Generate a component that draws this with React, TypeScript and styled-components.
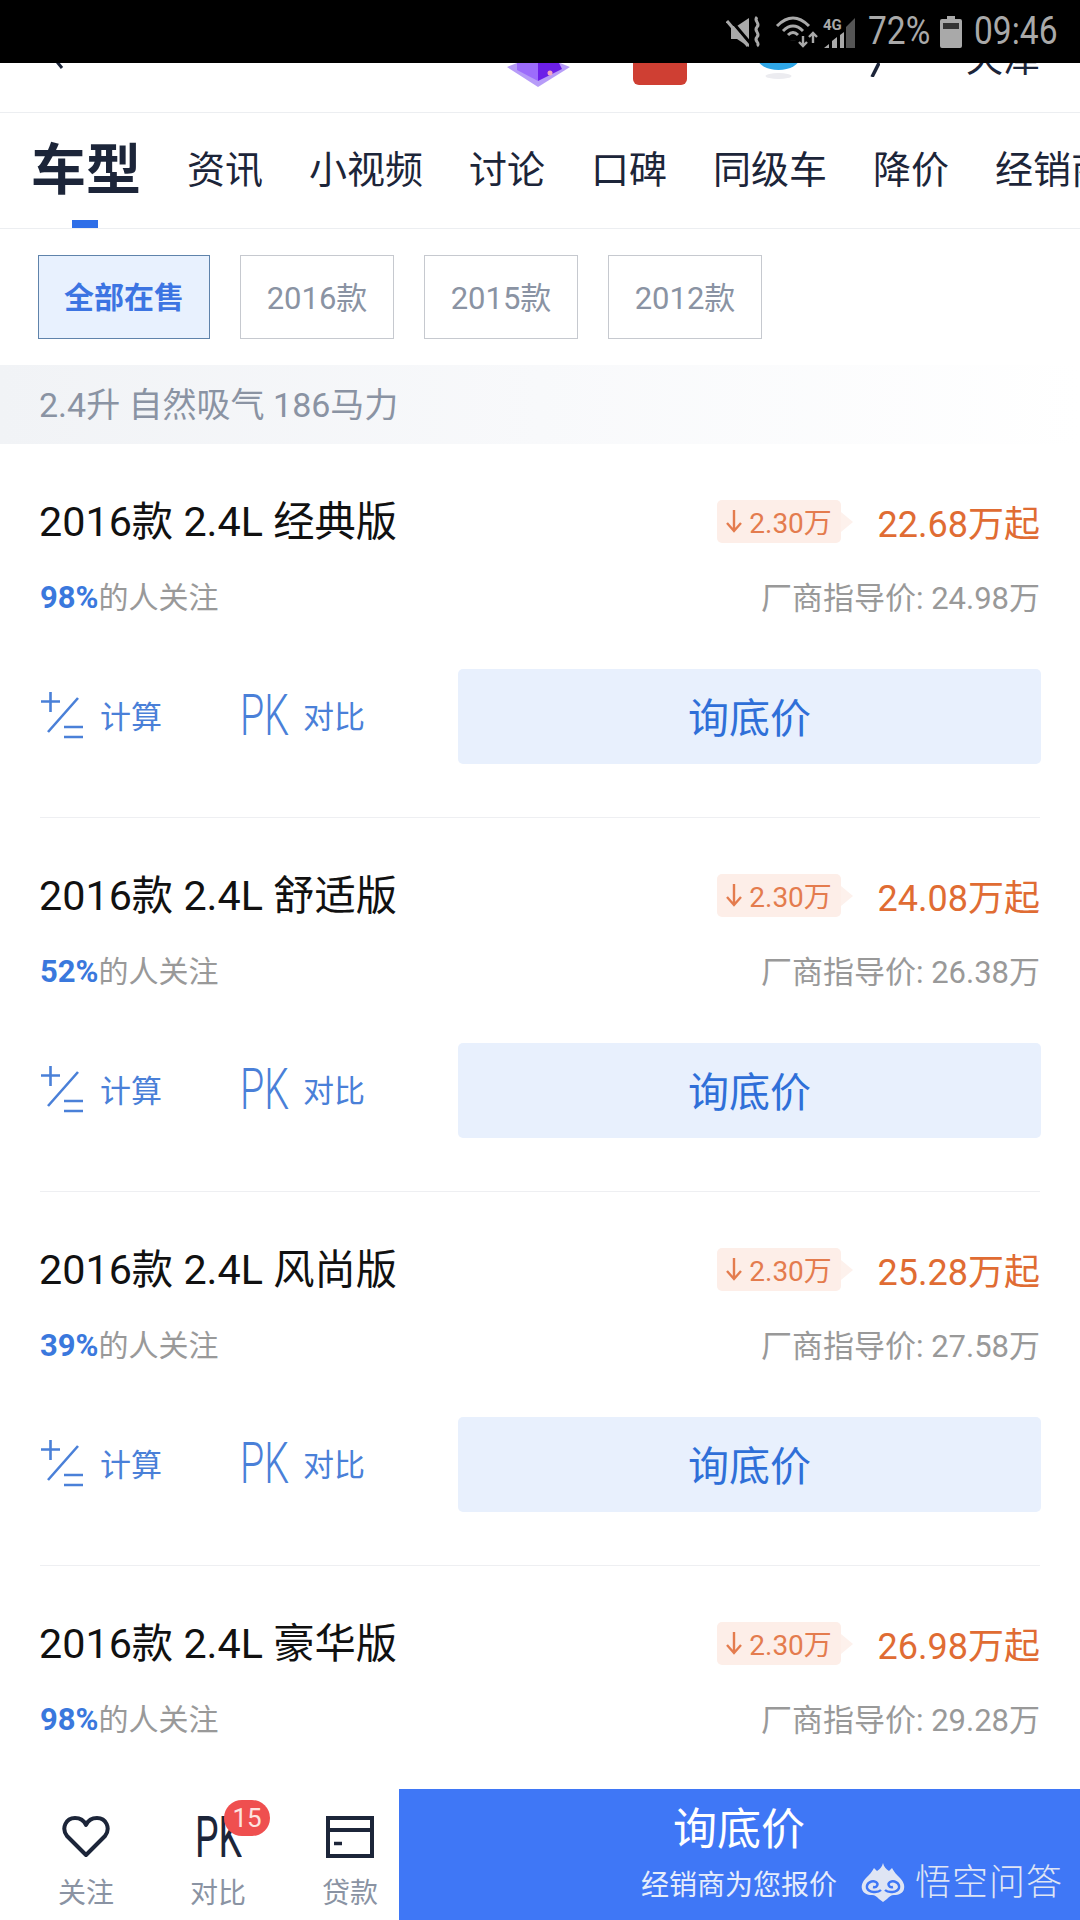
import styled, { createGlobalStyle } from 'styled-components'

const GlobalStyle = createGlobalStyle`
  html, body {
    margin: 0;
    padding: 0;
    background: #fff;
  }
  body {
    font-family: Roboto, "Noto Sans CJK SC", sans-serif;
  }
`

const Page = styled.div`
  width: 1080px;
  height: 1920px;
  display: flex;
  flex-direction: column;
  overflow: hidden;
  background: #fff;
`

const StatusBar = styled.div`
  height: 63px;
  flex: none;
  background: #000;
  color: #a9a9a9;
  display: flex;
  align-items: center;
  justify-content: flex-end;
  padding: 0 21px 0 0;
  box-sizing: border-box;
`

const StatusText = styled.span<{ $w: number }>`
  width: ${(p) => p.$w}px;
  font-size: 39px;
  line-height: 63px;
  white-space: nowrap;
  display: inline-block;
  transform: scaleX(0.86);
  transform-origin: left center;
`

const StatusIcon = styled.svg<{ $mr: number }>`
  flex: none;
  margin-right: ${(p) => p.$mr}px;
`

const TopNav = styled.div`
  height: 49px;
  flex: none;
  overflow: hidden;
  display: flex;
  align-items: flex-end;
  border-bottom: 1px solid #eceef1;
  box-sizing: content-box;
`

const NavIcon = styled.svg<{ $ml: number; $mb: number }>`
  flex: none;
  margin-left: ${(p) => p.$ml}px;
  margin-bottom: ${(p) => p.$mb}px;
`

const CityText = styled.span`
  flex: none;
  margin-left: 86px;
  margin-bottom: 32px;
  font-size: 37px;
  line-height: 40px;
  color: #1c2539;
`

const Tabs = styled.div`
  height: 115px;
  flex: none;
  display: flex;
  overflow: hidden;
  padding-left: 31px;
  gap: 46px;
  border-bottom: 1px solid #eceef1;
  white-space: nowrap;
`

const Tab = styled.div<{ $active?: boolean }>`
  position: relative;
  flex: none;
  font-size: ${(p) => (p.$active ? 55 : 38)}px;
  font-weight: ${(p) => (p.$active ? 700 : 400)};
  color: #1c2539;
  line-height: 114px;

  ${(p) =>
    p.$active &&
    `&::after {
      content: '';
      position: absolute;
      left: 41px;
      bottom: 0;
      width: 26px;
      height: 8px;
      background: #2f6fe8;
    }`}
`

const Filters = styled.div`
  height: 136px;
  flex: none;
  display: flex;
  align-items: flex-start;
  padding: 26px 0 0 38px;
  gap: 30px;
  box-sizing: border-box;
`

const Chip = styled.div<{ $active?: boolean }>`
  height: 84px;
  width: ${(p) => (p.$active ? 172 : 154)}px;
  box-sizing: border-box;
  padding-bottom: 4px;
  border: 1px solid ${(p) => (p.$active ? '#5f83ab' : '#c6c9cf')};
  background: ${(p) => (p.$active ? '#e8f1fe' : '#fff')};
  color: ${(p) => (p.$active ? '#3c74e2' : '#8a93a3')};
  font-size: ${(p) => (p.$active ? 30 : 31)}px;
  font-weight: ${(p) => (p.$active ? 700 : 400)};
  display: flex;
  align-items: center;
  justify-content: center;
`

const GroupBand = styled.div`
  height: 79px;
  flex: none;
  padding-left: 39px;
  font-size: 34px;
  line-height: 81px;
  color: #8a93a3;
  background: linear-gradient(90deg, #f1f3f6 0%, #f8f9fb 50%, #ffffff 100%);
`

const List = styled.div`
  flex: 1;
  min-height: 0;
  overflow: hidden;
`

const Card = styled.div`
  margin: 0 40px;
  height: 374px;
  box-sizing: border-box;
  padding-top: 53px;
  border-bottom: 1px solid #eeeff2;
`

const TopRow = styled.div`
  height: 48px;
  display: flex;
  align-items: center;
`

const CarName = styled.div`
  flex: 1;
  font-size: 41.3px;
  line-height: 48px;
  margin: 2px 0 0 -1px;
  color: #111;
  white-space: nowrap;
`

const Drop = styled.div`
  position: relative;
  width: 124px;
  height: 43px;
  margin-right: 37px;
  display: flex;
  align-items: center;
  justify-content: center;
  gap: 6px;
  border-radius: 5px;
  background: #fdeee8;
  color: #e47c4e;
  font-size: 28px;

  &::after {
    content: '';
    position: absolute;
    left: 100%;
    top: 12px;
    border-left: 12px solid #fdf1ec;
    border-top: 10px solid transparent;
    border-bottom: 10px solid transparent;
  }
`

const Price = styled.div`
  font-size: 36px;
  color: #e06c33;
  white-space: nowrap;
`

const MetaRow = styled.div`
  height: 40px;
  margin-top: 32px;
  padding-bottom: 4px;
  box-sizing: border-box;
  display: flex;
  align-items: center;
  justify-content: space-between;
  font-size: 30px;
  color: #999;
`

const Percent = styled.b`
  color: #3a78dd;
  font-size: 31px;
  font-weight: 700;
`

const GuidePrice = styled.span`
  font-size: 31px;
`

const ActionRow = styled.div`
  height: 95px;
  margin-top: 52px;
  display: flex;
  align-items: center;
`

const Action = styled.div<{ $w: number }>`
  width: ${(p) => p.$w}px;
  flex: none;
  display: flex;
  align-items: center;
  color: #4a80d8;
  font-size: 31px;
  white-space: nowrap;
  padding-bottom: 4px;
`

const ActionLabel = styled.span`
  margin-left: 14px;
`

const AskButton = styled.div`
  flex: 1;
  height: 95px;
  margin-right: -1px;
  border-radius: 5px;
  background: #e8f0fd;
  color: #2f6fd8;
  font-size: 41px;
  padding-bottom: 3px;
  box-sizing: border-box;
  display: flex;
  align-items: center;
  justify-content: center;
`

const BottomBar = styled.div`
  height: 131px;
  flex: none;
  display: flex;
  background: #fff;
`

const BarItems = styled.div`
  width: 399px;
  flex: none;
  display: flex;
  padding-left: 32px;
  box-sizing: border-box;
`

const BarItem = styled.div`
  position: relative;
  width: 108px;
  margin-right: 24px;
  flex: none;
  height: 100%;
  padding-top: 26px;
  box-sizing: border-box;
  display: flex;
  flex-direction: column;
  align-items: center;
  color: #8a93a3;
  font-size: 28px;
`

const BarLabel = styled.span`
  margin-top: 17px;
  line-height: 36px;
`

const Badge = styled.span`
  position: absolute;
  left: 60px;
  top: 11px;
  width: 46px;
  height: 36px;
  border-radius: 18px;
  background: #ef4f4f;
  color: #fde4e0;
  font-size: 26px;
  line-height: 36px;
  text-align: center;
`

const Cta = styled.div`
  flex: 1;
  background: #3f77f6;
  color: #fff;
  display: flex;
  flex-direction: column;
  align-items: center;
`

const CtaTitle = styled.div`
  width: 100%;
  padding-left: 274px;
  box-sizing: border-box;
  margin-top: 13px;
  font-size: 44px;
  line-height: 56px;
`

const CtaFoot = styled.div`
  width: 100%;
  padding-left: 242px;
  box-sizing: border-box;
  margin-top: 6px;
  display: flex;
  align-items: center;
  font-size: 28px;
  line-height: 44px;
  color: #e6edfb;
`

const Watermark = styled.span`
  display: flex;
  align-items: center;
  margin-left: 24px;
  margin-top: -7px;
  color: #dfe5f4;
  font-size: 36px;
  font-weight: 300;
  letter-spacing: 1px;
`

const LogoMark = styled.svg`
  flex: none;
  margin-right: 10px;
`

function CalcIcon() {
  return (
    <svg width="60" height="48" viewBox="0 0 60 48" fill="none" stroke="#4a80d8" strokeWidth="2.6">
      <path d="M1 10.5h19M10.5 1v20M38 7L8 41M24 36h19M24 46h19" />
    </svg>
  )
}

function PkIcon({ width, color, weight }: { width: number; color: string; weight: number }) {
  return (
    <svg width={width} height="44" viewBox={`0 0 ${width} 44`}>
      <text
        x="0"
        y="42"
        textLength={width}
        lengthAdjust="spacingAndGlyphs"
        fontFamily="Roboto"
        fontSize="58"
        fontWeight={weight}
        fill={color}
      >
        PK
      </text>
    </svg>
  )
}

function HeartIcon() {
  return (
    <svg width="48" height="44" viewBox="0 0 48 44" fill="none" stroke="#1c2539" strokeWidth="4" strokeLinejoin="round">
      <path d="M24 40L5 21C-1 13 4 3 13 3c5 0 9 2.500 11 7 2-4.500 6-7 11-7 9 0 14 10 8 18z" />
    </svg>
  )
}

function LoanIcon() {
  return (
    <svg width="48" height="44" viewBox="0 0 48 44" fill="none" stroke="#1c2539" strokeWidth="4">
      <path d="M2 3h44v38H2zM2 15h44" />
      <path d="M8 28.500h8" strokeWidth="3.500" />
    </svg>
  )
}

function WukongLogo() {
  return (
    <LogoMark width="44" height="40" viewBox="0 0 44 40" fill="#dfe5f4">
      <path d="M22 0c1 4 3 6 6 8l3-3c2 4 5 7 8 10 3 3 5 7 4 11-1 4-5 6-10 6-3 0-5 2-7 4l-4 3-4-3c-2-2-4-4-7-4-5 0-9-2-10-6-1-4 1-8 4-11 3-3 6-6 8-10l3 3c3-2 5-4 6-8z" />
      <path
        d="M20 27c-3 3-12 3-14-2-1-5 5-8 9-6 3 2 1 6-3 5M24 27c3 3 12 3 14-2 1-5-5-8-9-6-3 2-1 6 3 5"
        fill="none"
        stroke="#3f77f6"
        strokeWidth="2.400"
      />
    </LogoMark>
  )
}

const cars = [
  { name: '2016款 2.4L 经典版', price: '22.68万起', pct: '98%', guide: '24.98万' },
  { name: '2016款 2.4L 舒适版', price: '24.08万起', pct: '52%', guide: '26.38万' },
  { name: '2016款 2.4L 风尚版', price: '25.28万起', pct: '39%', guide: '27.58万' },
  { name: '2016款 2.4L 豪华版', price: '26.98万起', pct: '98%', guide: '29.28万' },
]

const tabs = ['资讯', '小视频', '讨论', '口碑', '同级车', '降价', '经销商']
const years = ['2016款', '2015款', '2012款']

export default function App() {
  return (
    <Page>
      <GlobalStyle />
      <StatusBar>
        <StatusIcon $mr={13} width="36" height="34" viewBox="0 0 36 34" fill="#a9a9a9">
          <path d="M5 11h6L23 3v29L11 24H5z" />
          <path d="M3 3l22 26" fill="none" stroke="#000" strokeWidth="3" />
          <path d="M1 6l21 25" fill="none" stroke="#a9a9a9" strokeWidth="3" />
          <path d="M31 2c-4 4 4 6 0 10s4 6 0 10 4 6 0 9" fill="none" stroke="#a9a9a9" strokeWidth="3" />
        </StatusIcon>
        <StatusIcon $mr={2} width="44" height="34" viewBox="0 0 44 34" fill="none" stroke="#a9a9a9" strokeWidth="3">
          <path d="M2 11Q18-5 34 11M8 16Q18 6 28 16M13 20Q18 15 23 20" />
          <path d="M18 25v.1" strokeWidth="5" />
          <path d="M28 21v10M24 27l4 4 4-4M38 28V18M34 22l4-4 4 4" strokeWidth="2.400" />
        </StatusIcon>
        <StatusIcon $mr={13} width="34" height="34" viewBox="0 0 34 34" fill="#a9a9a9">
          <text x="2" y="15" fontFamily="Roboto" fontSize="15" fontWeight="700">4G</text>
          <path d="M3 33l5-4v4zM11 33v-7l5-4v11zM19 33V20l4-3v16z" />
          <path d="M25 33V12l9-9v30z" fill="#555" />
        </StatusIcon>
        <StatusText $w={72}>72%</StatusText>
        <StatusIcon $mr={12} width="22" height="32" viewBox="0 0 22 32" fill="#a9a9a9">
          <path d="M7 0h8v3h5a2 2 0 0 1 2 2v25a2 2 0 0 1-2 2H2a2 2 0 0 1-2-2V5a2 2 0 0 1 2-2h5z" />
          <path d="M3 7h16v6H3z" fill="#333" />
        </StatusIcon>
        <StatusText $w={85}>09:46</StatusText>
      </StatusBar>

      <TopNav>
        <NavIcon $ml={46} $mb={40} width="18" height="40" viewBox="0 0 18 40" fill="none" stroke="#1c2539" strokeWidth="3">
          <path d="M16 4L3 20l13 16" />
        </NavIcon>
        <NavIcon $ml={443} $mb={25} width="63" height="24" viewBox="0 0 63 24" fill="#b79cf8">
          <path d="M0 4l10-4h43l10 4-32 20z" />
          <path d="M10 0h21v18L10 7z" fill="#9c6cfb" />
          <path d="M31 0h21l3 6-24 12z" fill="#6c1fe8" />
          <circle cx="43" cy="10" r="2.500" fill="#f3a6c0" />
        </NavIcon>
        <NavIcon $ml={63} $mb={26} width="54" height="24" viewBox="0 0 54 24" fill="#cf3f33">
          <path d="M0 0h54v17a6 6 0 0 1-6 6H6a6 6 0 0 1-6-6z" />
        </NavIcon>
        <NavIcon $ml={70} $mb={32} width="43" height="30" viewBox="0 0 43 30" fill="#2fa6e6">
          <ellipse cx="21.500" cy="8" rx="21" ry="12" />
          <ellipse cx="21.500" cy="4" rx="13" ry="7" fill="#14608f" />
          <ellipse cx="21.500" cy="26" rx="13" ry="3" fill="#ececf0" />
        </NavIcon>
        <NavIcon $ml={70} $mb={35} width="10" height="14" viewBox="0 0 10 14" fill="none" stroke="#1c2539" strokeWidth="3.500">
          <path d="M9 0L2 14" />
        </NavIcon>
        <CityText>天津</CityText>
      </TopNav>

      <Tabs>
        <Tab $active>车型</Tab>
        {tabs.map((t) => (
          <Tab key={t}>{t}</Tab>
        ))}
      </Tabs>

      <Filters>
        <Chip $active>全部在售</Chip>
        {years.map((y) => (
          <Chip key={y}>{y}</Chip>
        ))}
      </Filters>

      <GroupBand>2.4升 自然吸气 186马力</GroupBand>

      <List>
        {cars.map((car) => (
          <Card key={car.name}>
            <TopRow>
              <CarName>{car.name}</CarName>
              <Drop>
                <svg width="18" height="24" viewBox="0 0 18 24" fill="none" stroke="#e47c4e" strokeWidth="2.400">
                  <path d="M9 1v21M2 14l7 8 7-8" />
                </svg>
                2.30万
              </Drop>
              <Price>{car.price}</Price>
            </TopRow>
            <MetaRow>
              <span>
                <Percent>{car.pct}</Percent>的人关注
              </span>
              <GuidePrice>厂商指导价: {car.guide}</GuidePrice>
            </MetaRow>
            <ActionRow>
              <Action $w={200}>
                <CalcIcon />
                计算
              </Action>
              <Action $w={218}>
                <PkIcon width={49} color="#4a80d8" weight={300} />
                <ActionLabel>对比</ActionLabel>
              </Action>
              <AskButton>询底价</AskButton>
            </ActionRow>
          </Card>
        ))}
      </List>

      <BottomBar>
        <BarItems>
          <BarItem>
            <HeartIcon />
            <BarLabel>关注</BarLabel>
          </BarItem>
          <BarItem>
            <PkIcon width={47} color="#1c2539" weight={400} />
            <BarLabel>对比</BarLabel>
            <Badge>15</Badge>
          </BarItem>
          <BarItem>
            <LoanIcon />
            <BarLabel>贷款</BarLabel>
          </BarItem>
        </BarItems>
        <Cta>
          <CtaTitle>询底价</CtaTitle>
          <CtaFoot>
            经销商为您报价
            <Watermark>
              <WukongLogo />
              悟空问答
            </Watermark>
          </CtaFoot>
        </Cta>
      </BottomBar>
    </Page>
  )
}
